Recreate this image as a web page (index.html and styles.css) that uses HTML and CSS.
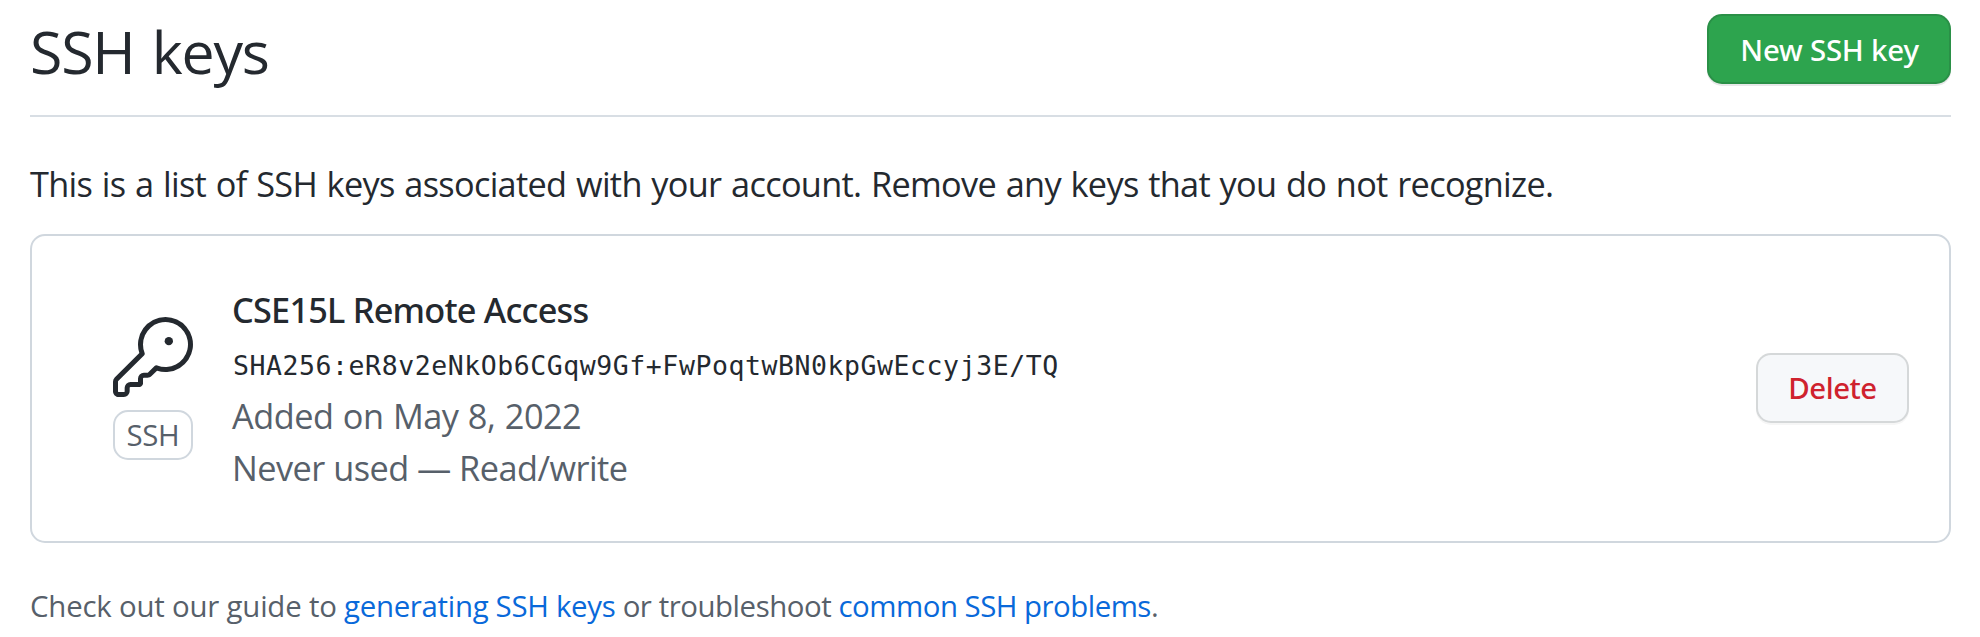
FILE: index.html
```html
<!DOCTYPE html>
<html lang="en">
<head>
<meta charset="utf-8">
<title>SSH keys</title>
<link rel="stylesheet" href="styles.css">
</head>
<body>
<main class="page">
  <header class="subhead">
    <h2 class="subhead-title">SSH keys</h2>
    <button class="btn btn-primary" type="button">New SSH key</button>
  </header>
  <p class="intro">This is a list of SSH keys associated with your account. Remove any keys that you do not recognize.</p>
  <section class="card">
    <div class="key-type">
      <svg class="key-icon" viewBox="0 0 24 24" aria-hidden="true"><path d="M16.75 8.5a1.25 1.25 0 100-2.5 1.25 1.25 0 000 2.5z"/><path fill-rule="evenodd" d="M15.75 0a8.25 8.25 0 00-7.851 10.79L.513 18.178A1.75 1.75 0 000 19.414v2.836C0 23.217.784 24 1.75 24h1.5A1.75 1.75 0 005 22.25v-1a.25.25 0 01.25-.25h2.735a.75.75 0 00.545-.22l.214-.213A.875.875 0 009 19.948V18.5a.25.25 0 01.25-.25h1.086c.464 0 .91-.184 1.237-.513l1.636-1.636A8.25 8.25 0 1015.75 0zM9 8.25a6.75 6.75 0 114.288 6.287.75.75 0 00-.804.168l-1.971 1.972a.25.25 0 01-.177.073H9.25A1.75 1.75 0 007.5 18.5v1H5.25a1.75 1.75 0 00-1.75 1.75v1a.25.25 0 01-.25.25h-1.5a.25.25 0 01-.25-.25v-2.836a.25.25 0 01.073-.177l7.722-7.721a.75.75 0 00.168-.804A6.73 6.73 0 019 8.25z"/></svg>
      <span class="badge">SSH</span>
    </div>
    <div class="details">
      <strong class="key-title">CSE15L Remote Access</strong>
      <code class="fingerprint">SHA256:eR8v2eNkOb6CGqw9Gf+FwPoqtwBN0kpGwEccyj3E/TQ</code>
      <span class="added">Added on May 8, 2022</span>
      <span class="usage">Never used — Read/write</span>
    </div>
    <button class="btn btn-danger" type="button">Delete</button>
  </section>
  <p class="help">Check out our guide to <a class="link" href="#">generating SSH keys</a><span class="joiner"> or troubleshoot </span><a class="link link-problems" href="#">common SSH problems</a>.</p>
</main>
</body>
</html>
```
FILE: styles.css
```css
* { box-sizing: border-box; }
body {
  margin: 0;
  background: #fff;
  color: #24292f;
  font: 400 34.3px/52px "Open Sans", sans-serif;
}
.page { padding: 14px 29px 0 30px; }
.subhead {
  display: flex;
  justify-content: space-between;
  align-items: center;
  padding-bottom: 31px;
  border-bottom: 2px solid #d8dee4;
}
.subhead-title {
  margin: 0;
  padding-top: 4px;
  font-size: 59px;
  font-weight: 400;
  line-height: 60px;
  letter-spacing: -1.2px;
  word-spacing: 3px;
}
.btn {
  height: 70px;
  padding: 0;
  border: 2px solid rgba(27, 31, 36, 0.15);
  border-radius: 15px;
  font: 500 29.4px/46px "Noto Sans", sans-serif;
  white-space: nowrap;
}
.btn-primary {
  width: 244px;
  padding: 2px 0 0 1px;
  background: #2da44e;
  color: #fff;
  letter-spacing: -0.2px;
  box-shadow: 0 2px 0 rgba(27, 31, 36, 0.1);
}
.btn-danger {
  width: 153px;
  margin: 0 0 1px auto;
  background: #f6f8fa;
  color: #cf222e;
  letter-spacing: -0.5px;
  box-shadow: 0 2px 0 rgba(27, 31, 36, 0.04);
}
.intro {
  margin: 41px 0 24px;
  letter-spacing: -0.69px;
  word-spacing: 1.4px;
}
.card {
  display: flex;
  align-items: center;
  gap: 40px;
  height: 309px;
  padding: 0 40px 0 81px;
  border: 2px solid #d0d7de;
  border-radius: 15px;
}
.key-type {
  display: flex;
  flex-direction: column;
  gap: 13px;
  width: 80px;
}
.key-icon {
  display: block;
  width: 80px;
  height: 80px;
  fill: #24292f;
}
.badge {
  height: 50px;
  border: 2px solid #d0d7de;
  border-radius: 15px;
  color: #57606a;
  font-size: 29.4px;
  line-height: 47px;
  letter-spacing: -0.3px;
  text-align: center;
}
.details {
  display: flex;
  flex-direction: column;
  margin-left: -1px;
}
.key-title {
  font-family: "Noto Sans", sans-serif;
  font-weight: 500;
  letter-spacing: -0.78px;
}
.fingerprint {
  padding: 7px 0 1px 1px;
  font: 26.5px/46px "DejaVu Sans Mono", monospace;
  letter-spacing: 0.56px;
}
.added, .usage { color: #57606a; }
.added {
  letter-spacing: -0.5px;
  word-spacing: 1px;
}
.usage { letter-spacing: -0.54px; }
.help {
  margin: 40px 0 0;
  color: #57606a;
  font-size: 29.4px;
  line-height: 46px;
  letter-spacing: -0.2px;
}
.link {
  color: #0969da;
  text-decoration: none;
  letter-spacing: -0.3px;
}
.joiner { letter-spacing: -0.44px; }
.link-problems { letter-spacing: -0.5px; }
```
